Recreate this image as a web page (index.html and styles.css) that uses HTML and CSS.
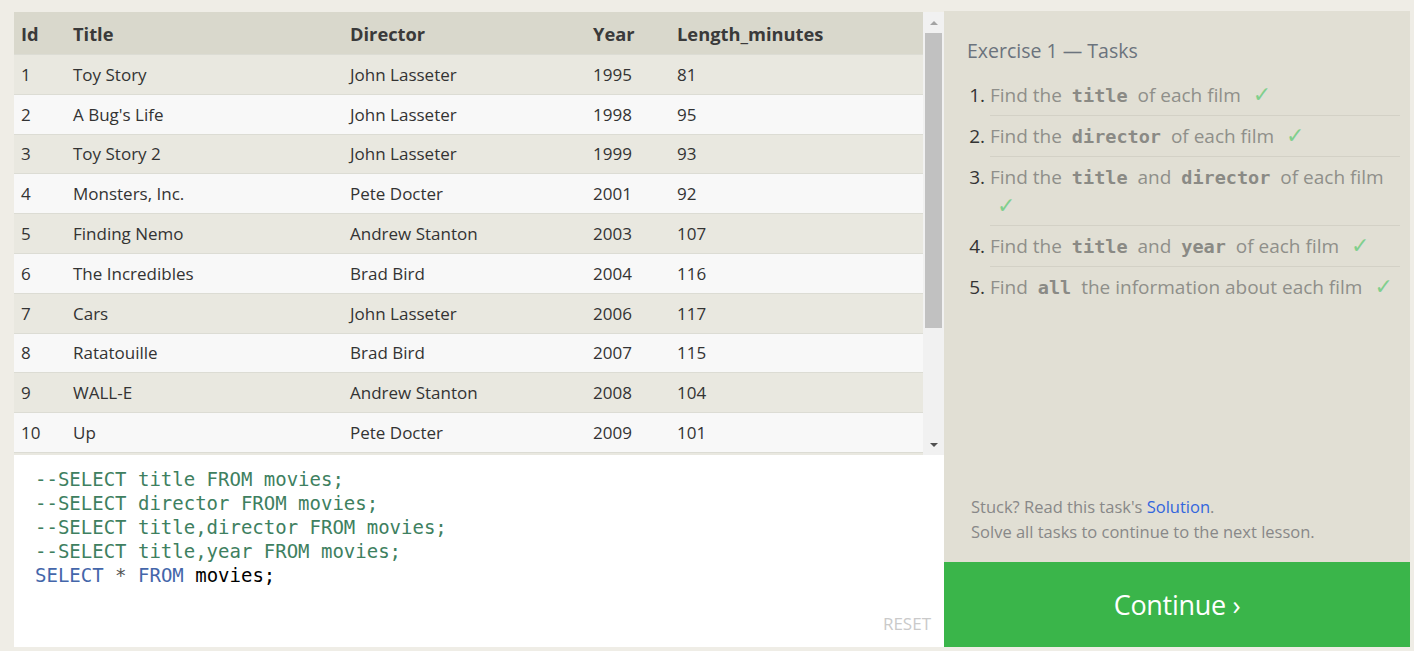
FILE: index.html
```html
<!DOCTYPE html>
<html>
<head>
<meta charset="utf-8">
<link rel="stylesheet" href="styles.css">
</head>
<body>
<div class="page">
  <div class="left">
    <div class="results">
      <div class="table-wrap">
        <table class="tbl">
          <thead>
            <tr><th class="c-id">Id</th><th class="c-title">Title</th><th class="c-dir">Director</th><th class="c-year">Year</th><th>Length_minutes</th></tr>
          </thead>
          <tbody>
            <tr><td>1</td><td>Toy Story</td><td>John Lasseter</td><td>1995</td><td>81</td></tr>
            <tr><td>2</td><td>A Bug's Life</td><td>John Lasseter</td><td>1998</td><td>95</td></tr>
            <tr><td>3</td><td>Toy Story 2</td><td>John Lasseter</td><td>1999</td><td>93</td></tr>
            <tr><td>4</td><td>Monsters, Inc.</td><td>Pete Docter</td><td>2001</td><td>92</td></tr>
            <tr><td>5</td><td>Finding Nemo</td><td>Andrew Stanton</td><td>2003</td><td>107</td></tr>
            <tr><td>6</td><td>The Incredibles</td><td>Brad Bird</td><td>2004</td><td>116</td></tr>
            <tr><td>7</td><td>Cars</td><td>John Lasseter</td><td>2006</td><td>117</td></tr>
            <tr><td>8</td><td>Ratatouille</td><td>Brad Bird</td><td>2007</td><td>115</td></tr>
            <tr><td>9</td><td>WALL-E</td><td>Andrew Stanton</td><td>2008</td><td>104</td></tr>
            <tr><td>10</td><td>Up</td><td>Pete Docter</td><td>2009</td><td>101</td></tr>
          </tbody>
        </table>
      </div>
      <div class="scrollbar">
        <div class="arrow up"></div>
        <div class="track"><div class="thumb"></div></div>
        <div class="arrow down"></div>
      </div>
    </div>
    <div class="editor">
      <pre class="code"><span class="cm">--SELECT title FROM movies;</span>
<span class="cm">--SELECT director FROM movies;</span>
<span class="cm">--SELECT title,director FROM movies;</span>
<span class="cm">--SELECT title,year FROM movies;</span>
<span class="kw">SELECT</span> <span class="op">*</span> <span class="kw">FROM</span> movies;</pre>
      <div class="reset">RESET</div>
    </div>
  </div>
  <div class="right">
    <div class="tasks">
      <h2 class="tasks-title">Exercise 1 — Tasks</h2>
      <ol class="task-list">
        <li><span class="num">1.</span><span class="task">Find the <code>title</code> of each film <span class="check">✓</span></span></li>
        <li><span class="num">2.</span><span class="task">Find the <code>director</code> of each film <span class="check">✓</span></span></li>
        <li><span class="num">3.</span><span class="task">Find the <code>title</code> and <code>director</code> of each film <span class="check">✓</span></span></li>
        <li><span class="num">4.</span><span class="task">Find the <code>title</code> and <code>year</code> of each film <span class="check">✓</span></span></li>
        <li><span class="num">5.</span><span class="task">Find <code>all</code> the information about each film <span class="check">✓</span></span></li>
      </ol>
    </div>
    <div class="hint">
      <p>Stuck? Read this task's <a class="sol">Solution</a>.</p>
      <p>Solve all tasks to continue to the next lesson.</p>
    </div>
    <div class="continue">Continue ›</div>
  </div>
</div>
</body>
</html>
```
FILE: styles.css
```css
html, body {
  margin: 0;
  padding: 0;
  background: #efede6;
  font-family: "Open Sans", "Noto Sans", sans-serif;
}
.page {
  display: flex;
  padding: 12px 4px 0 14px;
  height: 647px;
  box-sizing: border-box;
}
.left {
  width: 930px;
  display: flex;
  flex-direction: column;
  background: #fff;
}
.results {
  display: flex;
  height: 443px;
  flex: none;
  background: #f1f1f1;
}
.table-wrap {
  width: 909px;
  overflow: hidden;
  background: #e9e8e0;
}
.tbl {
  width: 100%;
  border-collapse: collapse;
  font-size: 17px;
  color: #333;
}
.tbl th {
  background: #d9d8cc;
  text-align: left;
  font-weight: 700;
  height: 42px;
  padding: 0 0 0 7px;
  font-size: 18.3px;
  color: #3a3a3a;
}
.tbl td {
  height: 38.8px;
  padding: 0 0 0 7px;
  border-top: 1px solid #dcdcd4;
}
.tbl tbody tr:last-child td { border-bottom: 1px solid #dcdcd4; }
.tbl tbody tr:nth-child(odd) td { background: #e9e8e0; }
.tbl tbody tr:nth-child(even) td { background: #f8f8f8; }
.c-id { width: 45px; }
.c-title { width: 270px; }
.c-dir { width: 236px; }
.c-year { width: 77px; }
.scrollbar {
  width: 21px;
  display: flex;
  flex-direction: column;
  background: #f1f1f1;
}
.arrow {
  height: 21px;
  display: flex;
  align-items: center;
  justify-content: center;
}
.arrow.up::after {
  content: "";
  border-left: 4px solid transparent;
  border-right: 4px solid transparent;
  border-bottom: 4px solid #a3a3a3;
}
.arrow.down::after {
  content: "";
  border-left: 4px solid transparent;
  border-right: 4px solid transparent;
  border-top: 4px solid #505050;
}
.track {
  flex: 1;
  padding: 0 2px 0 2px;
}
.thumb {
  height: 295px;
  background: #c1c1c1;
}
.editor {
  flex: 1;
  position: relative;
  background: #fff;
}
.code {
  margin: 0;
  padding: 12px 0 0 21px;
  font-family: "DejaVu Sans Mono", "Liberation Mono", monospace;
  font-size: 19px;
  line-height: 24px;
  color: #000;
}
.cm { color: #3e8060; }
.kw { color: #4466aa; }
.op { color: #555; }
.reset {
  position: absolute;
  right: 13px;
  bottom: 12px;
  font-size: 17px;
  color: #cacaca;
}
.right {
  width: 466px;
  display: flex;
  flex-direction: column;
  background: #e1dfd4;
  margin-top: -1px;
}
.tasks {
  flex: 1;
  padding: 26px 10px 0 23px;
}
.tasks-title {
  margin: 0 0 11px 0;
  font-weight: 400;
  font-size: 19.5px;
  color: #6b737d;
}
.task-list {
  list-style: none;
  margin: 0;
  padding: 0;
}
.task-list li {
  display: flex;
  align-items: baseline;
  font-size: 19px;
  line-height: 29px;
}
.num {
  width: 23px;
  flex: none;
  text-align: right;
  padding-right: 5px;
  box-sizing: border-box;
  color: #333;
}
.task {
  flex: 1;
  color: #8f8f8a;
  padding: 6px 0 5px 0;
  border-bottom: 1px solid #d3d1c6;
}
.task-list li:nth-child(3) .task { padding-bottom: 4px; }
.task-list li:last-child .task { border-bottom: none; }
.task code {
  font-family: "DejaVu Sans Mono", "Liberation Mono", monospace;
  font-weight: 700;
  color: #8a8a85;
  padding: 0 5px;
  font-size: 18.5px;
  line-height: 1;
}
.check {
  font-family: "DejaVu Sans", sans-serif;
  color: #80cf8d;
  font-size: 22px;
  line-height: 1;
  margin-left: 7px;
}
.hint {
  padding: 0 20px 18px 27px;
  font-size: 16.5px;
  color: #888;
}
.hint p { margin: 0; line-height: 25px; }
.sol { color: #3366dd; }
.continue {
  height: 85px;
  background: #3ab54a;
  color: #fff;
  font-size: 27px;
  display: flex;
  align-items: center;
  justify-content: center;
  letter-spacing: -0.3px;
}
```
